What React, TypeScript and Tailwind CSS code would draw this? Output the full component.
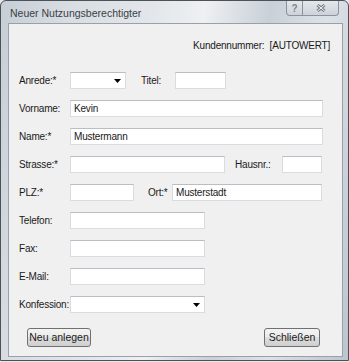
import React from 'react'

const font = "font-['Liberation_Sans_Narrow','Liberation_Sans',sans-serif]"

function TextBox({ width, value }: { width: string; value?: string }) {
  return (
    <div
      className={`${width} h-[17px] bg-white border border-[#d8dbe0] border-t-[#babdc3] pl-[3px] flex items-center text-[10px] tracking-[-0.2px] text-[#1a1a1a] whitespace-nowrap`}
    >
      {value}
    </div>
  )
}

function ComboBox({ width }: { width: string }) {
  return (
    <div
      className={`${width} h-[17px] bg-white border border-[#d8dbe0] border-t-[#babdc3] flex items-center justify-end pr-[4px]`}
    >
      <svg width="7" height="4" viewBox="0 0 7 4">
        <path d="M0 0 H7 L3.5 4 Z" fill="#000" />
      </svg>
    </div>
  )
}

function Label({ text, width = 'w-[51px]' }: { text: string; width?: string }) {
  return (
    <div className={`${width} shrink-0 text-[10px] tracking-[-0.2px] text-[#1a1a1a] leading-none pt-[1px] whitespace-nowrap`}>
      {text}
    </div>
  )
}

function Button({ text, width }: { text: string; width: string }) {
  return (
    <div
      className={`${width} h-[19px] rounded-[3px] border border-[#707070] bg-[linear-gradient(#f3f3f3_0%,#ebebeb_45%,#dddddd_50%,#cfcfcf_100%)] flex items-center justify-center text-[10.5px] text-[#1a1a1a] whitespace-nowrap`}
    >
      {text}
    </div>
  )
}

export default function App() {
  return (
    <div className={`w-[349px] h-[362px] bg-[#e8e8e8] ${font}`}>
      <div className="w-[349px] h-[361px] border border-[#4d5257] rounded-t-[6px] pl-[7px] pr-[5px] pb-[3px] flex flex-col bg-[linear-gradient(100deg,#c6ced6_0%,#d9dee3_18%,#e3e7eb_38%,#eef0f2_50%,#c9d0d7_66%,#dde2e6_80%,#bcc5ce_100%)]">
        {/* title bar */}
        <div className="h-[22px] flex justify-between">
          <div className="pl-[2px] pt-[5px] text-[10.5px] text-[#3a3f45] font-['Liberation_Sans',sans-serif]">
            Neuer Nutzungsberechtigter
          </div>
          <div className="flex h-[15px] mr-[4px]">
            <div className="w-[17px] h-[15px] border border-t-0 border-[#8c939b] rounded-bl-[4px] bg-[linear-gradient(#e4e8ec,#cdd3d9)] flex items-center justify-center text-[10px] font-bold text-[#80868d] font-['Liberation_Sans',sans-serif]">
              ?
            </div>
            <div className="w-[36px] h-[15px] border border-t-0 border-l-0 border-[#8c939b] rounded-br-[4px] bg-[linear-gradient(#e4e8ec,#cdd3d9)] flex items-center justify-center">
              <svg width="10" height="8" viewBox="0 0 10 8">
                <path d="M1.5 1 L8.5 7 M8.5 1 L1.5 7" stroke="#7d838a" strokeWidth="3" />
                <path d="M1.5 1 L8.5 7 M8.5 1 L1.5 7" stroke="#eef1f4" strokeWidth="1" />
              </svg>
            </div>
          </div>
        </div>

        {/* client area */}
        <div className="w-[335px] h-[334px] border border-[#98a1ab] bg-[#f0f0f0] pl-[10px] pr-[12px] pt-[16px] flex flex-col">
          <div className="h-[12px] flex justify-end text-[10px] tracking-[-0.2px] text-[#1a1a1a] leading-[12px]">
            Kundennummer:&nbsp;&nbsp;[AUTOWERT]
          </div>

          <div className="mt-[20px] flex flex-col gap-[11px]">
            <div className="flex items-center h-[17px]">
              <Label text="Anrede:*" />
              <ComboBox width="w-[56px]" />
              <div className="ml-[15px]">
                <Label text="Titel:" width="w-[34px]" />
              </div>
              <TextBox width="w-[51px]" />
            </div>

            <div className="flex items-center h-[17px]">
              <Label text="Vorname:" />
              <TextBox width="w-[253px]" value="Kevin" />
            </div>

            <div className="flex items-center h-[17px]">
              <Label text="Name:*" />
              <TextBox width="w-[253px]" value="Mustermann" />
            </div>

            <div className="flex items-center h-[17px]">
              <Label text="Strasse:*" />
              <TextBox width="w-[155px]" />
              <div className="ml-[10px]">
                <Label text="Hausnr.:" width="w-[47px]" />
              </div>
              <TextBox width="w-[40px]" />
            </div>

            <div className="flex items-center h-[17px]">
              <Label text="PLZ:*" />
              <TextBox width="w-[64px]" />
              <div className="ml-[14px]">
                <Label text="Ort:*" width="w-[24px]" />
              </div>
              <TextBox width="w-[150px]" value="Musterstadt" />
            </div>

            <div className="flex items-center h-[17px]">
              <Label text="Telefon:" />
              <TextBox width="w-[135px]" />
            </div>

            <div className="flex items-center h-[17px]">
              <Label text="Fax:" />
              <TextBox width="w-[135px]" />
            </div>

            <div className="flex items-center h-[17px]">
              <Label text="E-Mail:" />
              <TextBox width="w-[135px]" />
            </div>

            <div className="flex items-center h-[17px]">
              <Label text="Konfession:" />
              <ComboBox width="w-[135px]" />
            </div>
          </div>

          <div className="mt-[15px] flex justify-between pl-[8px] pr-[10px]">
            <Button text="Neu anlegen" width="w-[64px]" />
            <Button text="Schließen" width="w-[56px]" />
          </div>
        </div>
      </div>
    </div>
  )
}
